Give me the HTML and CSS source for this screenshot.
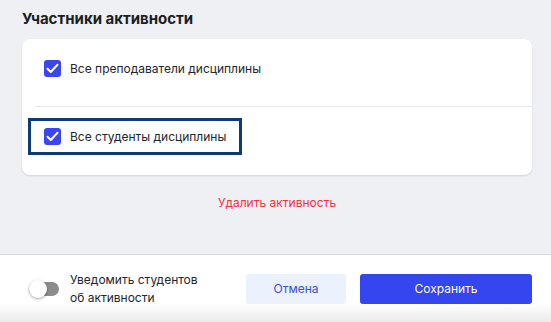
FILE: index.html
```html
<!DOCTYPE html>
<html lang="ru">
<head>
    <meta charset="UTF-8">
    <meta name="viewport" content="width=device-width, initial-scale=1.0">
    <title>Участники активности</title>
    <link rel="stylesheet" href="styles.css">
</head>
<body>
    <div class="page">
        <div class="content">
            <h2 class="title">Участники активности</h2>

            <div class="card">
                <div class="row">
                    <label class="check">
                        <span class="box">
                            <svg width="13" height="11" viewBox="0 0 13 11"><path d="M1.5 5.8 L4.8 9 L11.5 1.8" fill="none" stroke="#fff" stroke-width="2" stroke-linecap="round" stroke-linejoin="round"/></svg>
                        </span>
                        Все преподаватели дисциплины
                    </label>
                </div>
                <div class="divider"></div>
                <div class="row">
                    <label class="check focused">
                        <span class="box">
                            <svg width="13" height="11" viewBox="0 0 13 11"><path d="M1.5 5.8 L4.8 9 L11.5 1.8" fill="none" stroke="#fff" stroke-width="2" stroke-linecap="round" stroke-linejoin="round"/></svg>
                        </span>
                        Все студенты дисциплины
                    </label>
                </div>
            </div>

            <div class="delete">Удалить активность</div>
        </div>

        <!-- Нижняя панель -->
        <div class="footer">
            <div class="notify">
                <span class="toggle"><span class="knob"></span></span>
                <span class="notify-text">Уведомить студентов<br>об активности</span>
            </div>
            <div class="actions">
                <button class="btn btn-light">Отмена</button>
                <button class="btn btn-primary">Сохранить</button>
            </div>
        </div>
    </div>
</body>
</html>
```

FILE: styles.css
```css
body {
    margin: 0;
    padding: 0;
    background: #eef0f3;
    font-family: Inter, "Noto Sans", sans-serif;
    color: #1f2329;
    overflow: hidden;
}

.page {
    height: 100vh;
    display: flex;
    flex-direction: column;
}

.content {
    flex: 1;
    padding: 0 19px 0 22px;
}

.title {
    margin: 0;
    padding-top: 8px;
    height: 39px;
    box-sizing: border-box;
    font-size: 15px;
    line-height: 22px;
    font-weight: 700;
    color: #1b1e23;
}

.card {
    background: #fff;
    border-radius: 8px;
    box-shadow: 0 1px 2px rgba(0, 0, 0, 0.12);
    padding-bottom: 1px;
}

.row {
    padding: 14px 9px 22px;
    display: flex;
}

.divider {
    height: 1px;
    margin-left: 13px;
    background: #e7e9ec;
}

.check {
    display: flex;
    align-items: center;
    gap: 9px;
    height: 31px;
    padding: 0 13px;
    font-size: 12px;
    color: #22262b;
    cursor: pointer;
}

.check.focused {
    outline: 3px solid #0d3b78;
}

.box {
    width: 17px;
    height: 17px;
    border-radius: 3px;
    background: #3a46f2;
    display: flex;
    align-items: center;
    justify-content: center;
}

.delete {
    margin-top: 18px;
    text-align: center;
    font-size: 12px;
    line-height: 20px;
    color: #fb2d3a;
    cursor: pointer;
}

.footer {
    height: 68px;
    box-sizing: border-box;
    border-top: 1px solid #d3d7dc;
    background: linear-gradient(to bottom, #fff 72%, #ebebeb);
    display: flex;
    align-items: center;
    padding: 0 19px 0 29px;
}

.notify {
    display: flex;
    align-items: center;
    gap: 11px;
}

.toggle {
    position: relative;
    width: 30px;
    height: 14px;
    border-radius: 7px;
    background: #8c8c8c;
}

.knob {
    position: absolute;
    left: 0;
    top: -2px;
    width: 18px;
    height: 18px;
    border-radius: 50%;
    background: #fff;
    box-shadow: 0 1px 3px rgba(0, 0, 0, 0.35);
}

.notify-text {
    font-size: 12px;
    line-height: 18px;
    color: #22262b;
}

.actions {
    margin-left: auto;
    display: flex;
    gap: 14px;
}

.btn {
    height: 30px;
    border: none;
    border-radius: 3px;
    font-family: inherit;
    font-size: 12px;
    cursor: pointer;
}

.btn-light {
    width: 100px;
    background: #ebf1fd;
    color: #3d4ed8;
}

.btn-primary {
    width: 172px;
    background: #3346ef;
    color: #fff;
}
```
